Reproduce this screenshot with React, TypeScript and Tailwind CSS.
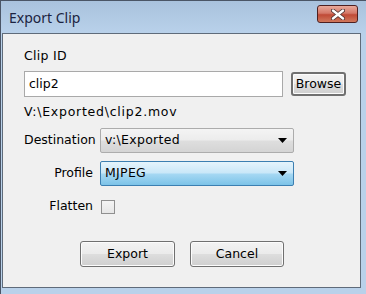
import React from 'react'

const ui = "font-['DejaVu_Sans',sans-serif] text-[12.5px] text-black"

function Arrow() {
  return (
    <svg width="9" height="5" viewBox="0 0 9 5" className="shrink-0">
      <path d="M0 0 H9 L4.5 5 Z" fill="#000" />
    </svg>
  )
}

function Combo({ value, active }: { value: string; active?: boolean }) {
  return (
    <div
      className={
        active
          ? 'flex h-[25px] w-[194px] items-center justify-between rounded-[2px] border border-[#3c7fb1] bg-[linear-gradient(#e5f4fc,#c9e7f8_48%,#a6d8f3_52%,#7cc3e8)] pl-[4px] pr-[6px]'
          : 'flex h-[25px] w-[194px] items-center justify-between rounded-[2px] border border-[#acacac] bg-[linear-gradient(#f4f4f4,#ececec_48%,#dedede_52%,#d4d4d4)] pl-[4px] pr-[6px]'
      }
    >
      <span className="tracking-[0.3px]">{value}</span>
      <Arrow />
    </div>
  )
}

function Button({ label, className }: { label: string; className: string }) {
  return (
    <button
      className={
        'flex items-center justify-center rounded-[3px] border border-[#707070] bg-[linear-gradient(#f3f3f3,#ebebeb_48%,#dddddd_52%,#cfcfcf)] shadow-[inset_0_0_0_1px_#fcfcfc] ' +
        className
      }
    >
      {label}
    </button>
  )
}

export default function App() {
  return (
    <div className="flex h-[294px] w-[366px] flex-col border-l border-t border-[#4a5566] bg-[#4fc4ec]">
      {/* title bar */}
      <div className="flex h-[32px] shrink-0 items-center justify-between bg-[linear-gradient(#a9c2dd,#b9d1ea)] pl-[8px] pr-[8px]">
        <span className="font-['Noto_Sans',sans-serif] text-[14px] text-[#1b2340]">Export Clip</span>
        <div className="mb-[6px] flex h-[18px] w-[41px] items-center justify-center rounded-[3px] border border-[#4e2020] bg-[linear-gradient(#e9a99a,#d47868_45%,#c04a36_55%,#d0785c)]">
          <svg width="14" height="11" viewBox="0 0 14 11">
            <path d="M2 1.5 L12 9.5 M12 1.5 L2 9.5" stroke="#4a3030" strokeWidth="4" strokeLinecap="round" />
            <path d="M2 1.5 L12 9.5 M12 1.5 L2 9.5" stroke="#ffffff" strokeWidth="2.4" strokeLinecap="round" />
          </svg>
        </div>
      </div>

      {/* client area */}
      <div className="flex flex-1 bg-[#b9d1ea] pb-[1px] pl-[1px]">
        <div className={'mb-[5px] mr-[5px] flex flex-1 flex-col border border-[#5f6b7a] bg-[#f0f0f0] pl-[21px] pt-[14px] ' + ui}>
          <div className="leading-[16px] tracking-[0.3px]">Clip ID</div>
          <div className="mt-[7px] flex items-center">
            <div className="flex h-[26px] w-[259px] items-center border border-[#a9a9a9] bg-white pl-[4px]">clip2</div>
            <Button label="Browse" className="ml-[8px] h-[24px] w-[55px] border-2 border-[#6e6e6e]" />
          </div>
          <div className="mt-[7px] leading-[16px] tracking-[0.75px]">V:\Exported\clip2.mov</div>

          <div className="mt-[8px] grid grid-cols-[69px_194px] items-center gap-x-[7px] gap-y-[8px]">
            <span className="text-right">Destination</span>
            <Combo value="v:\Exported" />
            <span className="text-right">Profile</span>
            <Combo value="MJPEG" active />
            <span className="text-right">Flatten</span>
            <div className="flex h-[25px] items-center pl-[1px]">
              <div className="h-[14px] w-[14px] border border-[#8f8f8f] bg-[linear-gradient(#f4f4f4,#e6e6e6)]" />
            </div>
          </div>

          <div className="mt-[22px] flex justify-center gap-[15px] pr-[20px]">
            <Button label="Export" className="h-[26px] w-[95px]" />
            <Button label="Cancel" className="h-[26px] w-[94px]" />
          </div>
        </div>
      </div>
    </div>
  )
}
